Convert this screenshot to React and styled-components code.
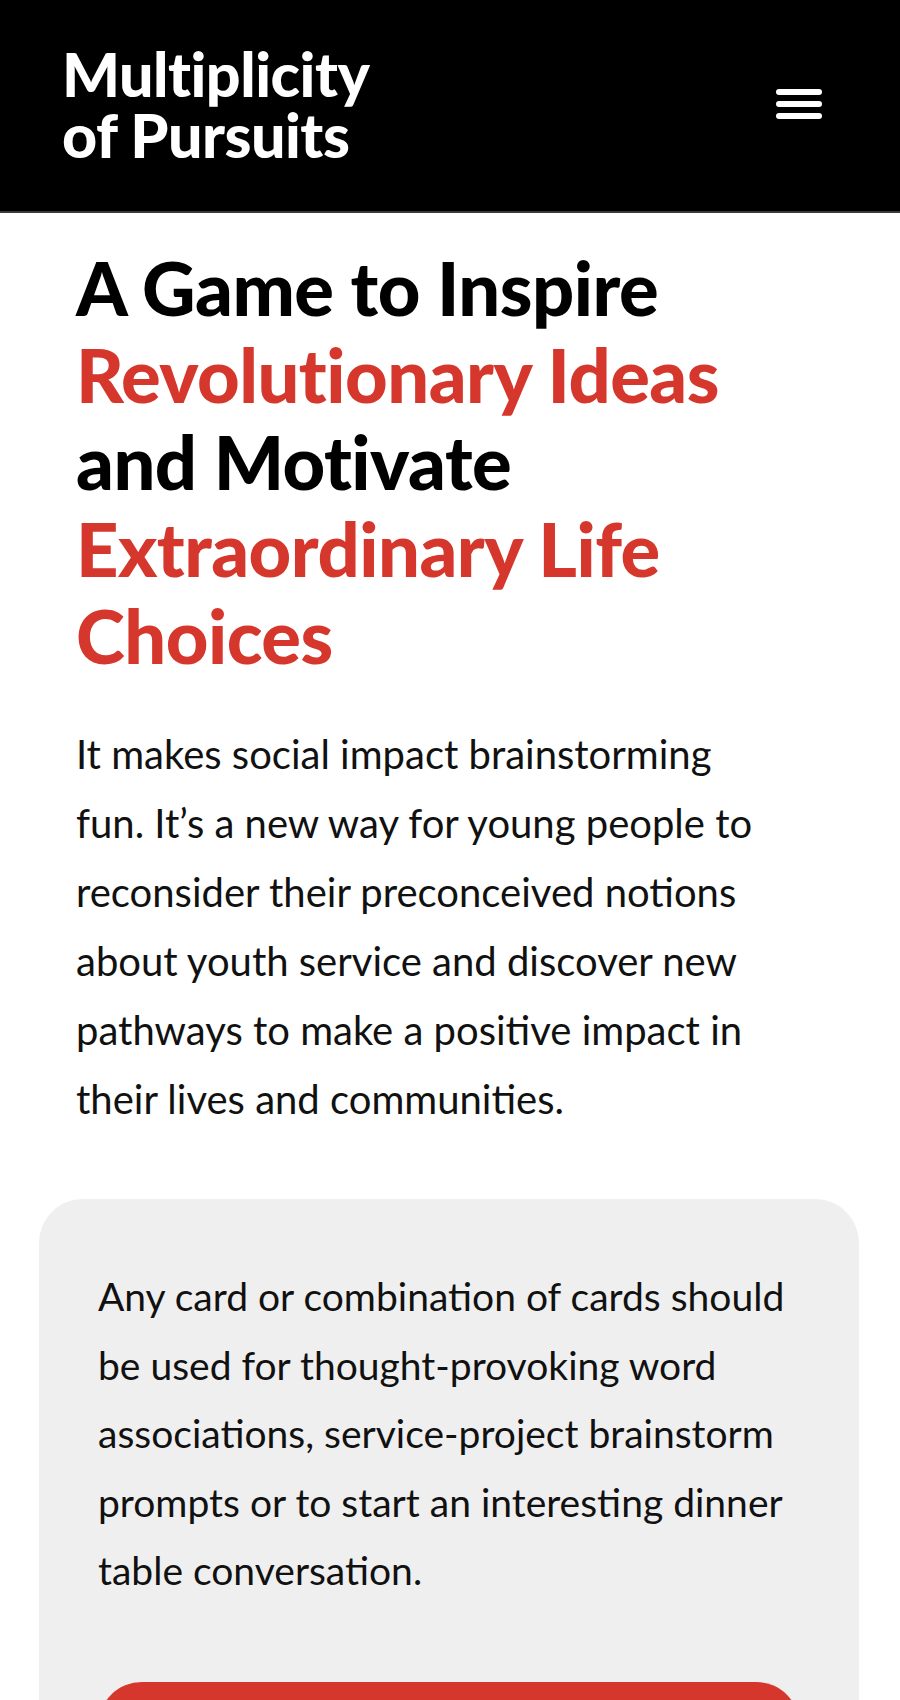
import styled, { createGlobalStyle } from "styled-components";

const GlobalStyle = createGlobalStyle`
  html, body {
    margin: 0;
    padding: 0;
    background: #ffffff;
  }
  body {
    font-family: "Lato", "Liberation Sans", sans-serif;
    color: #111111;
  }
  * {
    box-sizing: border-box;
  }
`;

const MenuIcon = () => (
  <svg width="46" height="30" viewBox="0 0 46 30" aria-hidden="true">
    <rect x="0" y="0" width="46" height="6" rx="3" fill="#fff" />
    <rect x="0" y="12" width="46" height="6" rx="3" fill="#fff" />
    <rect x="0" y="24" width="46" height="6" rx="3" fill="#fff" />
  </svg>
);

const App = () => {
  return (
    <Page>
      <GlobalStyle />
      <Header>
        <Logo href="#">
          Multiplicity
          <br />
          of Pursuits
        </Logo>
        <MenuButton aria-label="Open menu">
          <MenuIcon />
        </MenuButton>
      </Header>

      <Main>
        <Hero>
          <Title>
            A Game to Inspire <Accent>Revolutionary Ideas</Accent> and Motivate{" "}
            <Accent>Extraordinary Life Choices</Accent>
          </Title>
          <Lead>
            It makes social impact brainstorming fun. It’s a new way for young
            people to reconsider their preconceived notions about youth service
            and discover new pathways to make a positive impact in their lives
            and communities.
          </Lead>
        </Hero>

        <Card>
          <CardText>
            Any card or combination of cards should be used for
            thought-provoking word associations, service-project brainstorm
            prompts or to start an interesting dinner table conversation.
          </CardText>
          <CtaButton href="#">Get the Game</CtaButton>
        </Card>
      </Main>
    </Page>
  );
};

export default App;

const Page = styled.div`
  width: 100%;
  min-height: 1700px;
  background: #fff;
`;

const Header = styled.header`
  height: 213px;
  background: #000;
  border-bottom: 2px solid #3a3a3a;
  display: flex;
  align-items: center;
  justify-content: space-between;
  padding: 0 78px 4px 62px;
`;

const Logo = styled.a`
  font-family: "Lato", "Liberation Sans", sans-serif;
  font-weight: 900;
  font-size: 61px;
  line-height: 61px;
  color: #fff;
  text-decoration: none;
  letter-spacing: -0.5px;
`;

const MenuButton = styled.button`
  background: none;
  border: 0;
  padding: 0;
  display: flex;
  cursor: pointer;
`;

const Main = styled.main`
  padding: 31px 41px 0 39px;
`;

const Hero = styled.section`
  padding: 0 0 0 37px;
  max-width: 760px;
`;

const Title = styled.h1`
  margin: 0;
  font-family: "Lato", "Liberation Sans", sans-serif;
  font-weight: 900;
  font-size: 74px;
  line-height: 87px;
  letter-spacing: -0.5px;
  color: #000;
  max-width: 720px;
`;

const Accent = styled.span`
  color: #d6372c;
`;

const Lead = styled.p`
  margin: 41px 0 0;
  font-size: 40px;
  line-height: 69px;
  color: #111;
  max-width: 690px;
`;

const Card = styled.section`
  margin-top: 65px;
  background: #efefef;
  border-radius: 44px;
  padding: 63px 44px 80px 59px;
  display: flex;
  flex-direction: column;
  gap: 77px;
`;

const CardText = styled.p`
  margin: 0;
  font-size: 39px;
  line-height: 68.5px;
  color: #111;
`;

const CtaButton = styled.a`
  display: flex;
  align-items: center;
  justify-content: center;
  height: 116px;
  margin-right: 15px;
  background: #d6372c;
  color: #fff;
  border-radius: 44px;
  font-family: "Lato", "Liberation Sans", sans-serif;
  font-weight: 900;
  font-size: 40px;
  text-decoration: none;
`;
